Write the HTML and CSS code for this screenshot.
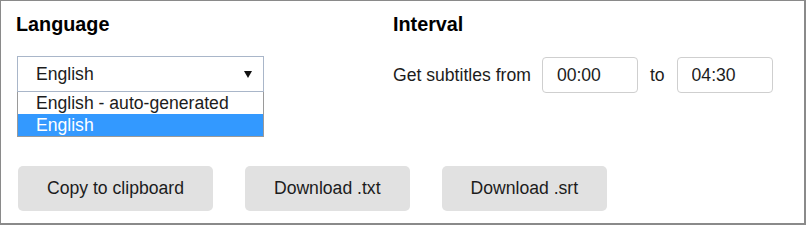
FILE: index.html
```html
<!DOCTYPE html>
<html lang="en">
<head>
    <meta charset="UTF-8">
    <meta name="viewport" content="width=device-width, initial-scale=1.0">
    <title>Subtitles</title>
    <link rel="stylesheet" href="styles.css">
</head>
<body>

    <!-- Subtitle options -->
    <section class="panel">
        <div class="settings">

            <!-- Language -->
            <div class="field">
                <h2>Language</h2>
                <div class="select-wrap">
                    <div class="select">
                        <span>English</span>
                        <span class="arrow"></span>
                    </div>
                    <ul class="dropdown">
                        <li>English - auto-generated</li>
                        <li class="active">English</li>
                    </ul>
                </div>
            </div>

            <!-- Interval -->
            <div class="field">
                <h2>Interval</h2>
                <div class="range">
                    <span>Get subtitles from</span>
                    <input type="text" value="00:00">
                    <span class="to">to</span>
                    <input type="text" value="04:30">
                </div>
            </div>
        </div>

        <!-- Actions -->
        <div class="actions">
            <button>Copy to clipboard</button>
            <button>Download .txt</button>
            <button>Download .srt</button>
        </div>
    </section>

</body>
</html>
```

FILE: styles.css
```css
/* Reset */
body, h2, ul {
    margin: 0;
    padding: 0;
}

body {
    font-family: "Liberation Sans", Arial, sans-serif;
    font-size: 17.6px;
    color: #1c1c1c;
    background-color: #fff;
}

/* Outer frame */
.panel {
    width: 806px;
    height: 225px;
    box-sizing: border-box;
    border: solid #8a8a8a;
    border-width: 1px 2px 2px 1px;
    padding: 12px 0 0 15px;
}

.settings {
    display: grid;
    grid-template-columns: 377px 1fr;
}

.field h2 {
    font-size: 19.8px;
    font-weight: bold;
    line-height: 23px;
    color: #000;
    margin-bottom: 20px;
}

/* Fake open select */
.select-wrap {
    position: relative;
    width: 247px;
    margin-left: 1px;
}

.select {
    display: flex;
    align-items: center;
    justify-content: space-between;
    height: 36px;
    box-sizing: border-box;
    border: 1px solid #a9b6c9;
    padding: 0 11px 0 18px;
}

.select .arrow {
    width: 0;
    height: 0;
    border-left: 4px solid transparent;
    border-right: 4px solid transparent;
    border-top: 7px solid #111;
}

.dropdown {
    position: absolute;
    top: 36px;
    left: 0;
    right: 0;
    list-style: none;
    background-color: #fff;
    border: 1px solid #9a9a9a;
    border-top: none;
}

.dropdown li {
    height: 22px;
    line-height: 22px;
    padding-left: 18px;
}

.dropdown li.active {
    background-color: #3399ff;
    color: #fff;
}

/* Interval row */
.range {
    display: flex;
    align-items: center;
    gap: 11px;
    padding-top: 1px;
}

.range .to {
    margin: 0 1px;
}

.range input {
    width: 96px;
    height: 36px;
    box-sizing: border-box;
    border: 1px solid #cfcfcf;
    border-radius: 4px;
    padding: 0 0 0 14px;
    font-family: inherit;
    font-size: 17.6px;
    color: #1c1c1c;
}

/* Buttons */
.actions {
    display: flex;
    gap: 32px;
    margin-top: 73px;
    padding-left: 2px;
}

.actions button {
    height: 45px;
    padding: 0 29px;
    background-color: #e1e1e1;
    border: none;
    border-radius: 5px;
    font-family: inherit;
    font-size: 17.6px;
    color: #1c1c1c;
    cursor: pointer;
}
```
